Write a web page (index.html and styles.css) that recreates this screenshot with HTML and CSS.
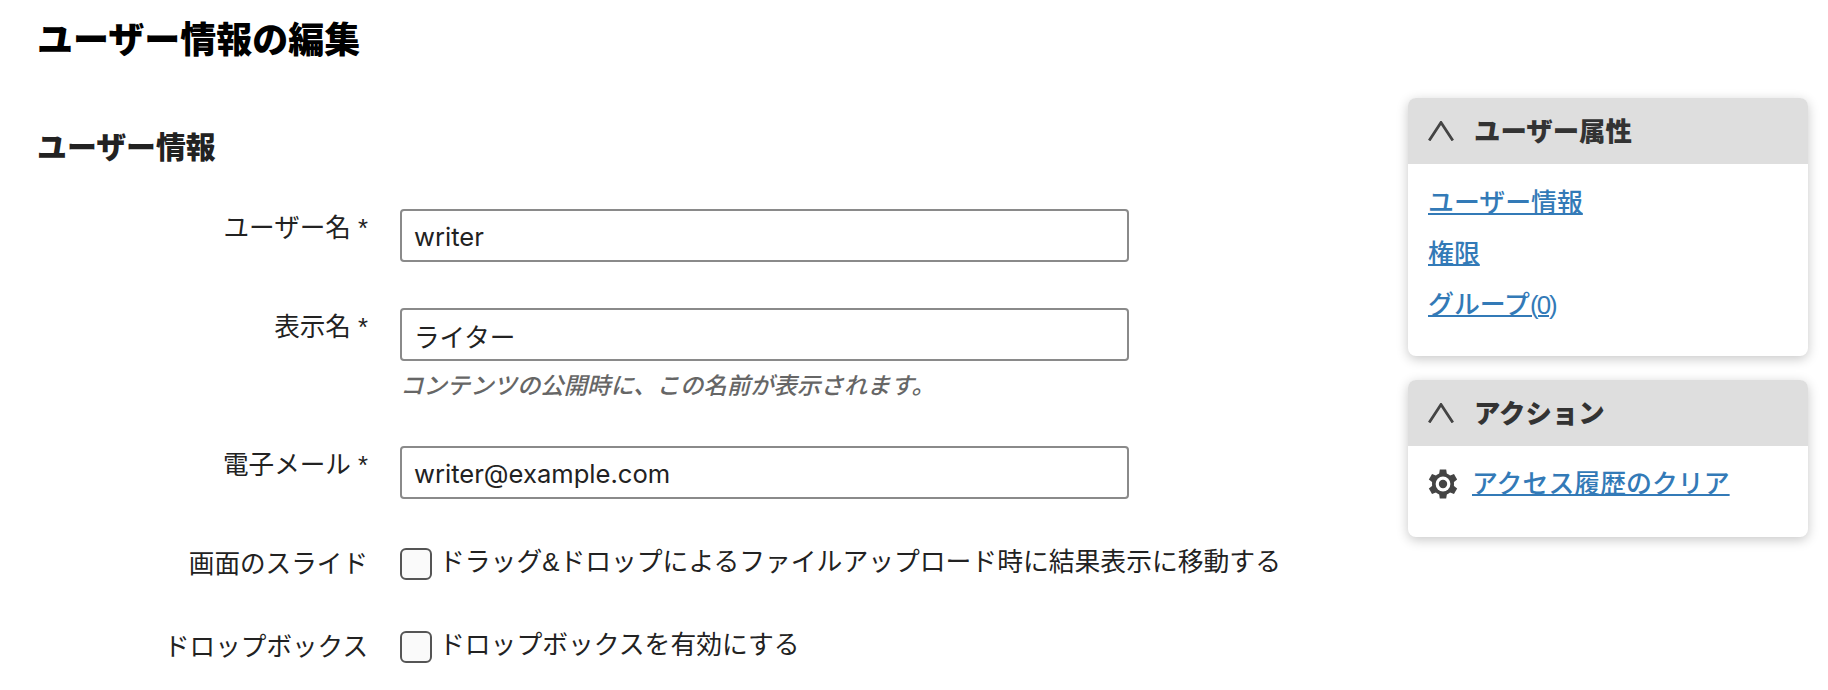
FILE: index.html
```html
<!DOCTYPE html>
<html lang="ja">
<head>
<meta charset="utf-8">
<title>ユーザー情報の編集</title>
<link rel="stylesheet" href="styles.css">
</head>
<body>
<div class="page">
  <main class="main">
    <h1 class="title">ユーザー情報の編集</h1>
    <h2 class="section">ユーザー情報</h2>
    <form class="form">
      <div class="row row-name">
        <label class="label">ユーザー名 *</label>
        <div class="field"><input class="input" type="text" value="writer"></div>
      </div>
      <div class="row row-display">
        <label class="label">表示名 *</label>
        <div class="field">
          <input class="input" type="text" value="ライター">
          <p class="help">コンテンツの公開時に、この名前が表示されます。</p>
        </div>
      </div>
      <div class="row row-email">
        <label class="label">電子メール *</label>
        <div class="field"><input class="input" type="text" value="writer@example.com"></div>
      </div>
      <div class="row row-check row-slide">
        <span class="label">画面のスライド</span>
        <label class="check"><span class="box"></span><span class="check-text">ドラッグ&amp;ドロップによるファイルアップロード時に結果表示に移動する</span></label>
      </div>
      <div class="row row-check row-drop">
        <span class="label">ドロップボックス</span>
        <label class="check"><span class="box"></span><span class="check-text">ドロップボックスを有効にする</span></label>
      </div>
    </form>
  </main>
  <aside class="side">
    <section class="panel panel-attrs">
      <header class="panel-head">
        <svg class="chev" viewBox="0 0 26 20"><path d="M1.2 19.5 13 1.5 24.8 19.5"/></svg>
        <span>ユーザー属性</span>
      </header>
      <div class="panel-body links">
        <a href="#">ユーザー情報</a>
        <a href="#">権限</a>
        <a href="#">グループ<span class="count">(0)</span></a>
      </div>
    </section>
    <section class="panel panel-actions">
      <header class="panel-head">
        <svg class="chev" viewBox="0 0 26 20"><path d="M1.2 19.5 13 1.5 24.8 19.5"/></svg>
        <span>アクション</span>
      </header>
      <div class="panel-body action">
        <svg class="gear" viewBox="0 0 30 30">
          <g class="gear-teeth">
            <path d="M11.8.5h6.4l.9 6h-8.2z"/>
            <path d="M11.8.5h6.4l.9 6h-8.2z" transform="rotate(60 15 15)"/>
            <path d="M11.8.5h6.4l.9 6h-8.2z" transform="rotate(120 15 15)"/>
            <path d="M11.8.5h6.4l.9 6h-8.2z" transform="rotate(180 15 15)"/>
            <path d="M11.8.5h6.4l.9 6h-8.2z" transform="rotate(240 15 15)"/>
            <path d="M11.8.5h6.4l.9 6h-8.2z" transform="rotate(300 15 15)"/>
            <circle cx="15" cy="15" r="11"/>
          </g>
          <circle class="gear-ring" cx="15" cy="15" r="7.4"/>
          <circle class="gear-hub" cx="15" cy="15" r="4.2"/>
        </svg>
        <a href="#">アクセス履歴のクリア</a>
      </div>
    </section>
  </aside>
</div>
</body>
</html>
```
FILE: styles.css
```css
* { box-sizing: border-box; }
html, body { margin: 0; padding: 0; background: #fff; }
body {
  font-family: "Liberation Sans", "Noto Sans CJK JP", sans-serif;
  font-size: 25.6px;
  color: #222;
  height: 690px;
  overflow: hidden;
}
.page { display: flex; justify-content: space-between; padding: 0 20px 0 37px; }
.main { width: 1340px; }
.title { margin: 19px 0 0; font-size: 36px; line-height: 44px; font-weight: 900; color: #000; }
.section { margin: 63px 0 0; font-size: 29.9px; line-height: 44px; font-weight: 900; }
.form { margin-top: 39px; }
.row { display: flex; align-items: flex-start; }
.label { width: 331px; margin-right: 32px; padding-top: 1px; text-align: right; line-height: 36px; flex: none; }
.row-display { margin-top: 46px; }
.row-email { margin-top: 42px; }
.row-check { align-items: center; }
.row-slide { margin-top: 46px; }
.row-drop { margin-top: 46px; }
.input {
  display: block;
  width: 729px;
  height: 53px;
  padding: 1px 12px 0;
  border: 2px solid #8a8a8a;
  border-radius: 4px;
  background: #fff;
  font-family: "Inter", "Noto Sans CJK JP", sans-serif;
  font-size: 25.6px;
  color: #222;
  outline: none;
}
.help { margin: 7px 0 0; font-size: 23.4px; line-height: 36px; font-style: italic; color: #666; font-weight: 500; }
.check { display: flex; align-items: flex-start; }
.box {
  width: 32px;
  height: 32px;
  margin-right: 7px;
  flex: none;
  border: 2px solid #555;
  border-radius: 6px;
  background: #fafafa;
}
.check-text { font-size: 25.8px; line-height: 28px; }
.side { width: 400px; flex: none; padding-top: 98px; }
.panel { background: #fff; border-radius: 8px; box-shadow: 0 3px 12px rgba(0,0,0,.22); overflow: hidden; }
.panel-actions { margin-top: 24px; }
.panel-head {
  display: flex;
  align-items: center;
  height: 66px;
  padding: 0 0 3px 20px;
  background: #dedede;
  color: #333;
  font-size: 26.4px;
  font-weight: 900;
}
.chev { width: 26px; height: 20px; margin: 2px 20px 0 0; fill: none; stroke: #444; stroke-width: 2.8; }
.panel-body a { color: #337ab7; font-size: 25.9px; font-weight: 500; text-decoration: underline; text-decoration-thickness: 2px; }
.count { letter-spacing: -2px; }
.links { height: 192px; padding: 21px 20px 0; display: flex; flex-direction: column; gap: 15px; align-items: flex-start; line-height: 36px; }
.action { height: 91px; padding: 20px 20px 0; display: flex; align-items: flex-start; line-height: 36px; }
.gear { width: 30px; height: 30px; margin: 3px 14px 0 0; flex: none; }
.gear-teeth { fill: #444; }
.gear-ring { fill: #fff; }
.gear-hub { fill: #444; }
```
